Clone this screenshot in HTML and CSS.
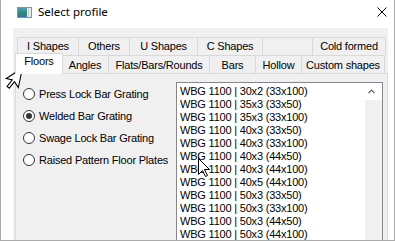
FILE: index.html
```html
<!DOCTYPE html>
<html lang="en">
<head>
    <meta charset="UTF-8">
    <title>Select profile</title>
    <link rel="stylesheet" href="styles.css">
</head>
<body>
    <div class="window">
        <div class="titlebar">
            <svg class="app-icon" width="15" height="11" viewBox="0 0 15 11">
                <defs>
                    <linearGradient id="pane" x1="0" y1="0" x2="0" y2="1">
                        <stop offset="0" stop-color="#4f9fbf"/>
                        <stop offset="0.5" stop-color="#2e8b6e"/>
                        <stop offset="1" stop-color="#3b6fae"/>
                    </linearGradient>
                </defs>
                <rect x="0.5" y="0.5" width="14" height="10" fill="#e8ecef" stroke="#8c9299"/>
                <rect x="1" y="1" width="9" height="9" fill="url(#pane)"/>
                <line x1="11.5" y1="1" x2="11.5" y2="10" stroke="#c5ccd3"/>
            </svg>
            <span class="title">Select profile</span>
            <svg class="close" width="10" height="10" viewBox="0 0 10 10">
                <path d="M0.5 0.5 L9.5 9.5 M9.5 0.5 L0.5 9.5" stroke="#000" stroke-width="1"/>
            </svg>
        </div>

        <div class="client">
            <div class="tab-row tab-row-back">
                <div class="tab">I Shapes</div>
                <div class="tab">Others</div>
                <div class="tab">U Shapes</div>
                <div class="tab">C Shapes</div>
                <div class="tab"></div>
                <div class="tab">Cold formed</div>
            </div>
            <div class="tab-row tab-row-front">
                <div class="tab tab-active">Floors</div>
                <div class="tab">Angles</div>
                <div class="tab">Flats/Bars/Rounds</div>
                <div class="tab">Bars</div>
                <div class="tab">Hollow</div>
                <div class="tab">Custom shapes</div>
            </div>

            <div class="tab-page">
                <div class="options">
                    <div class="option"><span class="radio"></span>Press Lock Bar Grating</div>
                    <div class="option"><span class="radio checked"></span>Welded Bar Grating</div>
                    <div class="option"><span class="radio"></span>Swage Lock Bar Grating</div>
                    <div class="option"><span class="radio"></span>Raised Pattern Floor Plates</div>
                </div>
                <div class="listbox">
                    <ul class="items">
                        <li>WBG 1100 | 30x2 (33x100)</li>
                        <li>WBG 1100 | 35x3 (33x50)</li>
                        <li>WBG 1100 | 35x3 (33x100)</li>
                        <li>WBG 1100 | 40x3 (33x50)</li>
                        <li>WBG 1100 | 40x3 (33x100)</li>
                        <li>WBG 1100 | 40x3 (44x50)</li>
                        <li>WBG 1100 | 40x3 (44x100)</li>
                        <li>WBG 1100 | 40x5 (44x100)</li>
                        <li>WBG 1100 | 50x3 (33x50)</li>
                        <li>WBG 1100 | 50x3 (33x100)</li>
                        <li>WBG 1100 | 50x3 (44x50)</li>
                        <li>WBG 1100 | 50x3 (44x100)</li>
                    </ul>
                    <div class="scrollbar">
                        <div class="scroll-up">
                            <svg width="7" height="5" viewBox="0 0 7 5">
                                <path d="M0.5 4 L3.5 1 L6.5 4" fill="none" stroke="#606060" stroke-width="1.2"/>
                            </svg>
                        </div>
                        <div class="scroll-track"></div>
                    </div>
                </div>
            </div>
        </div>

        <!-- pointers over the dialog -->
        <svg class="cursor cursor-hint" width="26" height="36" viewBox="0 0 26 36">
            <g transform="translate(22.5 8) rotate(12) scale(1.25)">
                <path d="M0 0 L0 16 L-4 12 L-7 18 L-9 17 L-6 11 L-11 11 Z" fill="#fff" stroke="#000" stroke-width="0.85" stroke-linejoin="miter"/>
            </g>
        </svg>
        <svg class="cursor cursor-list" width="13" height="20" viewBox="0 0 13 20">
            <path d="M0.5 0.5 L0.5 16.5 L4.5 12.5 L7.5 18.5 L9.5 17.5 L6.5 11.5 L11.5 11.5 Z" fill="#fff" stroke="#000" stroke-width="1"/>
        </svg>
    </div>
</body>
</html>
```

FILE: styles.css
```css
body {
    margin: 0;
    background: #fff;
}
.window {
    position: relative;
    width: 395px;
    height: 241px;
    box-sizing: border-box;
    border: 1px solid #acacac;
    border-top: none;
    background: #fff;
    overflow: hidden;
    display: flex;
    flex-direction: column;
}
.titlebar {
    height: 28px;
    flex: none;
    display: flex;
    align-items: flex-start;
    padding: 0 7px 0 16px;
}
.app-icon {
    margin-top: 7px;
}
.title {
    margin-left: 6px;
    font: 11.5px/24px "Noto Sans", "Open Sans", sans-serif;
    color: #000;
}
.close {
    margin-left: auto;
    margin-top: 7px;
}
.client {
    flex: 1;
    min-height: 0;
    display: flex;
    flex-direction: column;
    margin: 0 6px 0 12px;
    padding-top: 9px;
    background: #f0f0f0;
    font: 11px "Liberation Sans", Arial, sans-serif;
    letter-spacing: -0.2px;
    color: #000;
}
.tab-row {
    display: grid;
    height: 18px;
    flex: none;
    margin-left: 4px;
}
.tab-row-back {
    grid-template-columns: 61px 51px 68px 65px 50px 74px;
}
.tab-row-front {
    grid-template-columns: 44px 47px 101px 46px 46px 84px;
}
.tab {
    box-sizing: border-box;
    border-top: 1px solid #d9d9d9;
    border-left: 1px solid #d9d9d9;
    background: #f0f0f0;
    text-align: center;
    line-height: 13px;
    white-space: nowrap;
    padding-top: 2px;
}
.tab:last-child {
    border-right: 1px solid #d9d9d9;
}
.tab-row-front .tab {
    padding-top: 3px;
}
.tab-row-front .tab-active {
    position: relative;
    z-index: 1;
    margin: -2px -2px -1px;
    padding-top: 1px;
    border-right: 1px solid #d9d9d9;
    background: #fff;
}
.tab-page {
    flex: 1;
    min-height: 0;
    display: flex;
    align-items: stretch;
    margin-left: 2px;
    padding: 8px 4px 0 7px;
    border: 1px solid #d9d9d9;
    border-bottom: none;
}
.options {
    width: 153px;
    flex: none;
    padding-top: 1px;
}
.option {
    height: 22px;
    display: flex;
    align-items: center;
    gap: 4px;
    white-space: nowrap;
}
.radio {
    width: 12px;
    height: 12px;
    box-sizing: border-box;
    border: 1px solid #333;
    border-radius: 50%;
    background: #fff;
    display: flex;
    align-items: center;
    justify-content: center;
}
.radio.checked::after {
    content: '';
    width: 6px;
    height: 6px;
    border-radius: 50%;
    background: #333;
}
.listbox {
    width: 207px;
    flex: none;
    box-sizing: border-box;
    border: 1px solid #828790;
    border-bottom: none;
    background: #fff;
    display: flex;
}
.items {
    flex: 1;
    list-style: none;
    margin: 0;
    padding: 2px 0 0 3px;
    line-height: 13px;
    white-space: nowrap;
    overflow: hidden;
}
.scrollbar {
    width: 17px;
    display: flex;
    flex-direction: column;
}
.scroll-up {
    height: 17px;
    display: flex;
    align-items: center;
    padding-left: 3px;
    background: #fff;
}
.scroll-track {
    flex: 1;
    background: #f0f0f0;
}
.cursor {
    position: absolute;
}
.cursor-hint {
    left: -1px;
    top: 60px;
}
.cursor-list {
    left: 197px;
    top: 158px;
}
```
